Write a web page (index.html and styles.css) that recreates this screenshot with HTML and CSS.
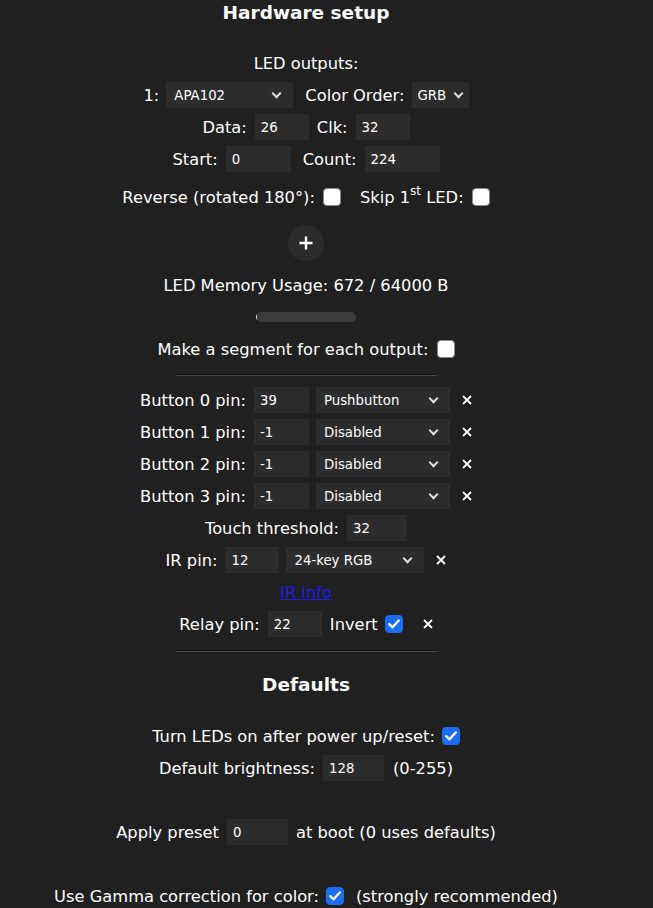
FILE: index.html
```html
<!DOCTYPE html>
<html lang="en">
<head>
<meta charset="utf-8">
<title>Hardware setup</title>
<link rel="stylesheet" href="styles.css">
</head>
<body>
<main class="page">
  <h2 class="title">Hardware setup</h2>

  <div class="row first">LED outputs:</div>
  <div class="row">
    <span>1:</span>
    <span class="sel w127 tight"><select><option>APA102</option></select></span>
    <span class="grp">Color Order:</span>
    <span class="sel w57 tight small"><select><option>GRB</option></select></span>
  </div>
  <div class="row">
    <span>Data:</span>
    <input class="num w54" type="text" value="26">
    <span>Clk:</span>
    <input class="num w54" type="text" value="32">
  </div>
  <div class="row">
    <span>Start:</span>
    <input class="num w65" type="text" value="0">
    <span class="grp">Count:</span>
    <input class="num w75" type="text" value="224">
  </div>
  <div class="row rev">
    <span>Reverse (rotated 180°):</span>
    <span class="cb"></span>
    <span class="grp2">Skip 1<sup>st</sup> LED:</span>
    <span class="cb"></span>
  </div>
  <div class="plusrow">
    <button class="plus" type="button" aria-label="Add output">
      <svg width="14" height="14" viewBox="0 0 14 14"><path d="M7 0.5V13.5M0.5 7H13.5" stroke="#fff" stroke-width="2.4"/></svg>
    </button>
  </div>
  <div class="row mem">LED Memory Usage: 672 / 64000 B</div>
  <div class="row"><span class="bar"><span class="fill" style="width:1%"></span></span></div>
  <div class="row">
    <span>Make a segment for each output:</span>
    <span class="cb"></span>
  </div>

  <hr class="sep top">

  <div class="row">
    <span>Button 0 pin:</span>
    <input class="num w55" type="text" value="39">
    <span class="sel w134 tight"><select><option>Pushbutton</option></select></span>
    <span class="x"><svg width="10" height="10" viewBox="0 0 10 10"><path d="M1 1L9 9M9 1L1 9" stroke="#fff" stroke-width="1.8"/></svg></span>
  </div>
  <div class="row">
    <span>Button 1 pin:</span>
    <input class="num w55" type="text" value="-1">
    <span class="sel w134 tight"><select><option>Disabled</option></select></span>
    <span class="x"><svg width="10" height="10" viewBox="0 0 10 10"><path d="M1 1L9 9M9 1L1 9" stroke="#fff" stroke-width="1.8"/></svg></span>
  </div>
  <div class="row">
    <span>Button 2 pin:</span>
    <input class="num w55" type="text" value="-1">
    <span class="sel w134 tight"><select><option>Disabled</option></select></span>
    <span class="x"><svg width="10" height="10" viewBox="0 0 10 10"><path d="M1 1L9 9M9 1L1 9" stroke="#fff" stroke-width="1.8"/></svg></span>
  </div>
  <div class="row">
    <span>Button 3 pin:</span>
    <input class="num w55" type="text" value="-1">
    <span class="sel w134 tight"><select><option>Disabled</option></select></span>
    <span class="x"><svg width="10" height="10" viewBox="0 0 10 10"><path d="M1 1L9 9M9 1L1 9" stroke="#fff" stroke-width="1.8"/></svg></span>
  </div>
  <div class="row">
    <span>Touch threshold:</span>
    <input class="num w60" type="text" value="32">
  </div>
  <div class="row">
    <span>IR pin:</span>
    <input class="num w54" type="text" value="12">
    <span class="sel w138 tight"><select><option>24-key RGB</option></select></span>
    <span class="x"><svg width="10" height="10" viewBox="0 0 10 10"><path d="M1 1L9 9M9 1L1 9" stroke="#fff" stroke-width="1.8"/></svg></span>
  </div>
  <div class="row"><a class="link" href="#">IR info</a></div>
  <div class="row">
    <span>Relay pin:</span>
    <input class="num w54" type="text" value="22">
    <span>Invert</span>
    <span class="cb on tight"><svg width="12" height="10" viewBox="0 0 12 10"><path d="M1.3 5.2L4.5 8.3L10.7 1.5" fill="none" stroke="#fff" stroke-width="2.4" stroke-linecap="round" stroke-linejoin="round"/></svg></span>
    <span class="x wide"><svg width="10" height="10" viewBox="0 0 10 10"><path d="M1 1L9 9M9 1L1 9" stroke="#fff" stroke-width="1.8"/></svg></span>
  </div>

  <hr class="sep bottom">

  <h2 class="title defaults">Defaults</h2>
  <div class="row">
    <span>Turn LEDs on after power up/reset:</span>
    <span class="cb on tight"><svg width="12" height="10" viewBox="0 0 12 10"><path d="M1.3 5.2L4.5 8.3L10.7 1.5" fill="none" stroke="#fff" stroke-width="2.4" stroke-linecap="round" stroke-linejoin="round"/></svg></span>
  </div>
  <div class="row">
    <span>Default brightness:</span>
    <input class="num w61 gap12" type="text" value="128">
    <span class="after">(0-255)</span>
  </div>
  <div class="row spaced">
    <span>Apply preset</span>
    <input class="num w61" type="text" value="0">
    <span>at boot (0 uses defaults)</span>
  </div>
  <div class="row spaced">
    <span>Use Gamma correction for color:</span>
    <span class="cb on tight"><svg width="12" height="10" viewBox="0 0 12 10"><path d="M1.3 5.2L4.5 8.3L10.7 1.5" fill="none" stroke="#fff" stroke-width="2.4" stroke-linecap="round" stroke-linejoin="round"/></svg></span>
    <span class="grp">(strongly recommended)</span>
  </div>
</main>
</body>
</html>
```

FILE: styles.css
```css
html, body {
  margin: 0;
  padding: 0;
  background: #202020;
}

body {
  color: #fff;
  font-family: "DejaVu Sans", Verdana, sans-serif;
  font-size: 16.3px;
}

.page {
  width: 612px;
  text-align: center;
}

.title {
  margin: 0;
  height: 26px;
  line-height: 26px;
  font-size: 18.5px;
  font-weight: bold;
}

.row {
  display: flex;
  justify-content: center;
  align-items: center;
  gap: 8px;
  height: 32px;
  white-space: nowrap;
}

.row.first { margin-top: 21px; }
.row.rev { margin-top: 6px; }
.row.mem { margin-top: 8px; }
.row.spaced { margin-top: 32px; }

.grp { margin-left: 4px; }
.grp2 { margin-left: 11px; }
.tight { margin-left: -1px; }
.after { margin-left: 1px; }

sup {
  font-size: 12px;
  line-height: 0;
  position: relative;
  top: -1px;
}

input.num {
  box-sizing: border-box;
  height: 26px;
  padding: 0 6px;
  border: 0;
  background: #2c2c2c;
  color: #fff;
  font-family: "DejaVu Sans", Verdana, sans-serif;
  font-size: 13.3px;
  outline: none;
}

.w54 { width: 54px; }
.w55 { width: 55px; }
.w60 { width: 60px; }
.w61 { width: 61px; }
.w65 { width: 65px; }
.w75 { width: 75px; }

.sel {
  position: relative;
  display: inline-flex;
}

.sel select {
  appearance: none;
  -webkit-appearance: none;
  box-sizing: border-box;
  width: 100%;
  height: 26px;
  padding: 0 8px;
  border: 0;
  border-radius: 0;
  background: #2c2c2c;
  color: #fff;
  font-family: "DejaVu Sans", Verdana, sans-serif;
  font-size: 13.3px;
  outline: none;
}

.sel::after {
  content: "";
  position: absolute;
  right: 13px;
  top: 8px;
  width: 5px;
  height: 5px;
  border-right: 2px solid #ddd;
  border-bottom: 2px solid #ddd;
  transform: rotate(45deg);
  pointer-events: none;
}

.sel.small select { padding: 0 6px; }
.sel.small::after { right: 7px; }

.w127 { width: 127px; }
.w57 { width: 57px; }
.w134 { width: 134px; }
.w138 { width: 138px; }

.cb {
  box-sizing: border-box;
  display: inline-flex;
  align-items: center;
  justify-content: center;
  width: 18px;
  height: 18px;
  border: 1px solid #8a8a8a;
  border-radius: 4px;
  background: #fff;
}

.cb.on {
  border-color: #1a6ef5;
  background: #1a6ef5;
}

.x {
  display: inline-flex;
  align-items: center;
  margin-left: 4px;
}

.x.wide { margin-left: 12px; }

.plusrow {
  display: flex;
  justify-content: center;
  margin-top: 12px;
}

.plus {
  display: flex;
  align-items: center;
  justify-content: center;
  width: 36px;
  height: 36px;
  padding: 0;
  border: 0;
  border-radius: 50%;
  background: #2c2c2c;
}

.bar {
  display: block;
  width: 100px;
  height: 10px;
  border-radius: 5px;
  background: #3c3c3c;
  overflow: hidden;
}

.fill {
  display: block;
  height: 100%;
  background: #e6e6e6;
}

.sep {
  width: 261px;
  height: 0;
  margin: 9px auto 8px;
  border: 0;
  border-top: 1px solid #111;
  border-bottom: 1px solid #4a4a4a;
}

.sep.bottom { margin: 10px auto 20px; }

.defaults { margin-bottom: 22px; }

.link {
  color: #1c1cf0;
  text-decoration: underline;
}
```
